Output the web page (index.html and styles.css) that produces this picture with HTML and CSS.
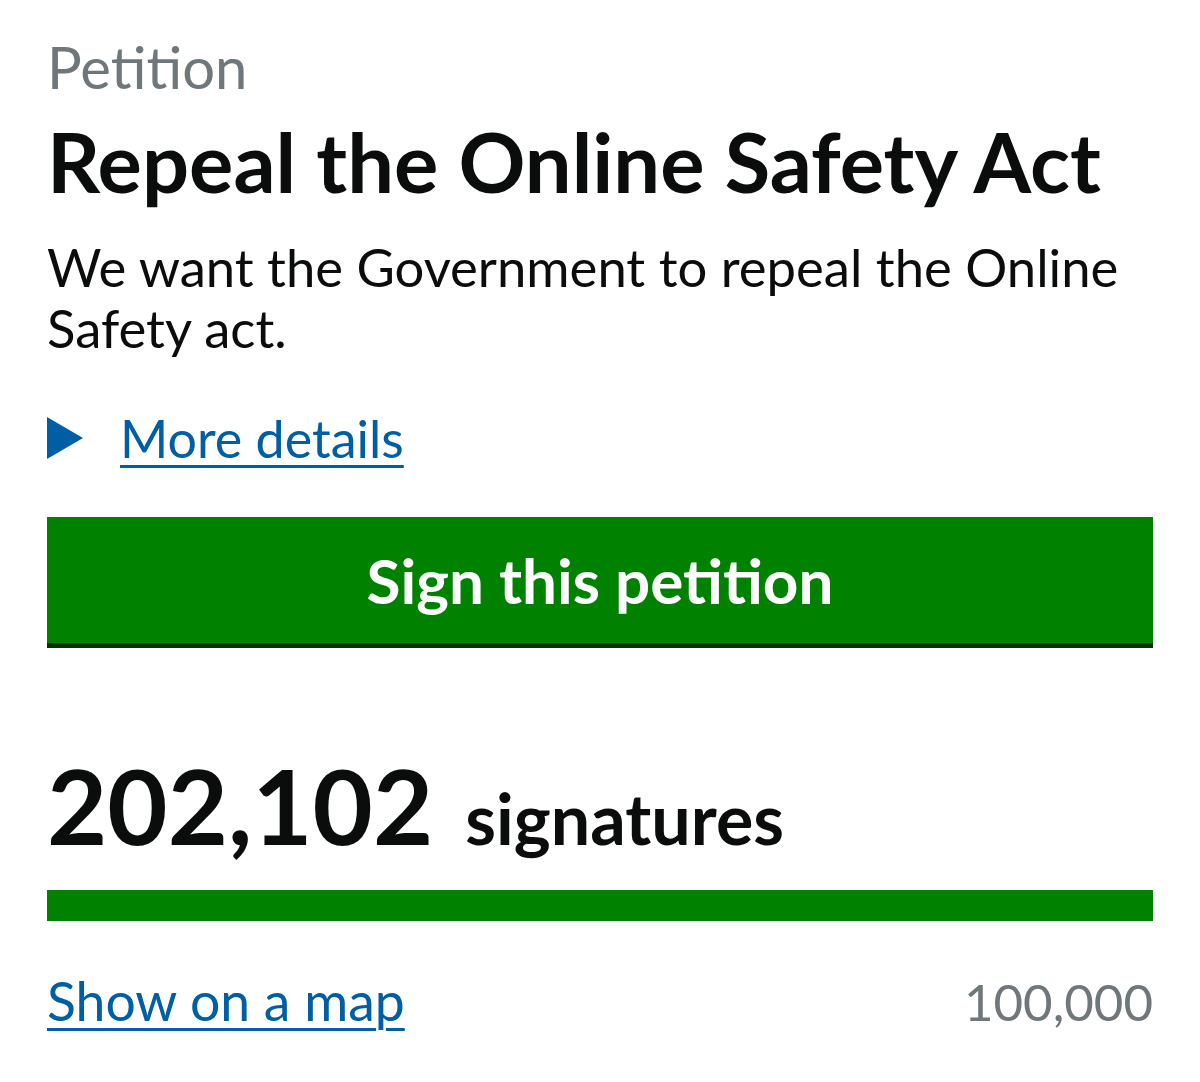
FILE: index.html
```html
<!DOCTYPE html>
<html lang="en">
<head>
<meta charset="utf-8">
<title>Repeal the Online Safety Act</title>
<link rel="stylesheet" href="styles.css">
</head>
<body>
<main class="page">
  <p class="caption">Petition</p>
  <h1 class="title">Repeal the Online Safety Act</h1>
  <p class="desc">We want the Government to repeal the Online Safety act.</p>
  <div class="details">
    <svg class="arrow" width="36" height="42" viewBox="0 0 36 42"><polygon points="0,0 36,21 0,42" fill="#005ea5"/></svg>
    <a class="link" href="#">More details</a>
  </div>
  <button class="sign">Sign this petition</button>
  <div class="count"><span class="num">202,102</span><span class="unit">signatures</span></div>
  <div class="bar"><div class="fill" style="width:100%"></div></div>
  <div class="foot">
    <a class="link link-map" href="#">Show on a map</a>
    <span class="target">100,000</span>
  </div>
</main>
</body>
</html>
```
FILE: styles.css
```css
html, body {
  margin: 0;
  padding: 0;
  background: #ffffff;
}
body {
  font-family: Lato, "Noto Sans", sans-serif;
  color: #0b0c0c;
}
.page {
  padding: 0 47px;
  display: flex;
  flex-direction: column;
}
.caption {
  margin: 27px 0 0;
  font-size: 58px;
  line-height: 80px;
  color: #6f777b;
}
.title {
  margin: 4px 0 0;
  font-size: 83px;
  line-height: 100px;
  font-weight: 700;
}
.desc {
  margin: 25px 0 0;
  font-size: 52.6px;
  line-height: 61px;
}
.details {
  display: flex;
  align-items: center;
  gap: 37px;
  margin-top: 45px;
}
.arrow {
  display: block;
}
.link {
  color: #005ea5;
  font-size: 52px;
  line-height: 70px;
  text-decoration: underline;
  text-decoration-thickness: 3px;
  text-underline-offset: 7px;
}
.link-map {
  font-size: 53.5px;
}
.sign {
  margin-top: 44px;
  height: 131px;
  box-sizing: border-box;
  border: none;
  border-bottom: 5px solid #003300;
  background: #008200;
  color: #ffffff;
  font-family: inherit;
  font-size: 62px;
  font-weight: 700;
  padding: 0;
}
.count {
  margin-top: 102px;
  display: flex;
  align-items: baseline;
  gap: 32px;
}
.num {
  font-size: 104px;
  font-weight: 700;
  line-height: 110px;
}
.unit {
  font-size: 70px;
  font-weight: 700;
}
.bar {
  margin-top: 30px;
  height: 31px;
  background: #e0e0e0;
}
.fill {
  height: 100%;
  background: #008200;
}
.foot {
  margin-top: 44px;
  display: flex;
  justify-content: space-between;
  align-items: baseline;
}
.target {
  font-size: 51px;
  color: #6f777b;
}
```
